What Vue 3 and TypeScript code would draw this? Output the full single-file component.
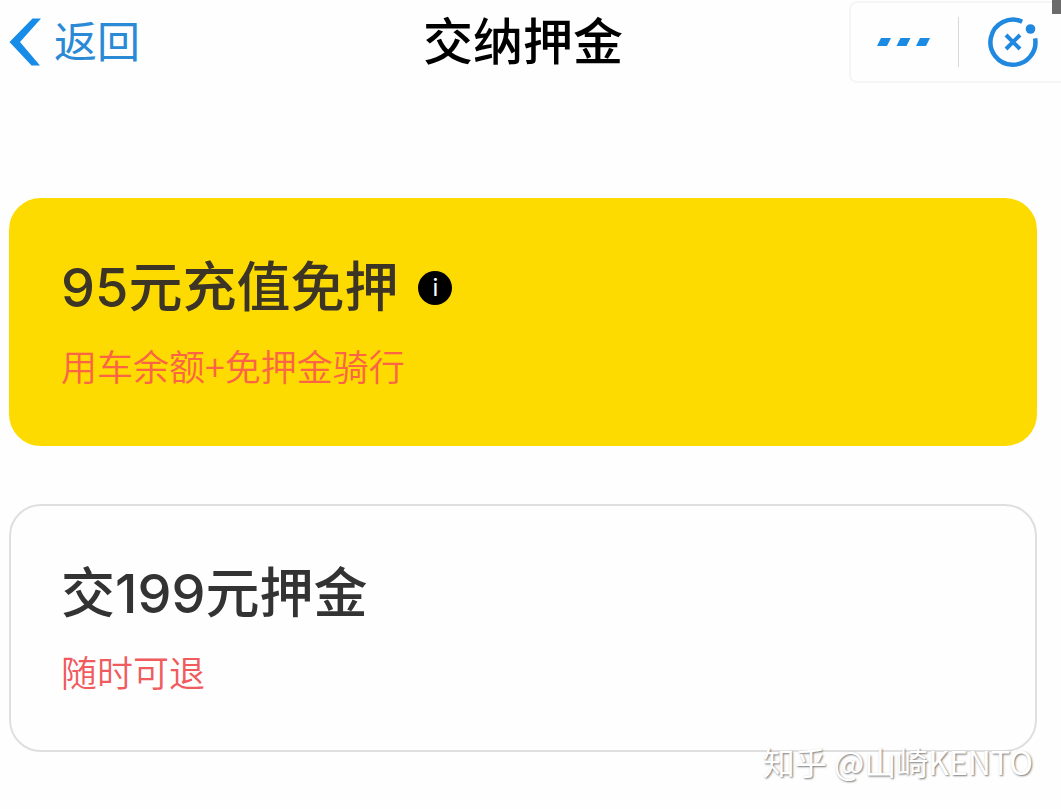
<script setup lang="ts">
import { ref } from 'vue'

interface Plan {
  id: string
  title: string
  note: string
  hasInfo: boolean
}

const plans: Plan[] = [
  { id: 'recharge', title: '95元充值免押', note: '用车余额+免押金骑行', hasInfo: true },
  { id: 'deposit', title: '交199元押金', note: '随时可退', hasInfo: false },
]

const selected = ref<string>('recharge')
</script>

<template>
  <div class="page">
    <header class="bar">
      <a class="back" href="#">
        <svg class="chevron" viewBox="0 0 32 48" aria-hidden="true">
          <path d="M23.500 0.500H32L11 24L31 47.500H22.500L0.500 24Z" fill="#178be8" />
        </svg>
        <span>返回</span>
      </a>
      <h1 class="title">交纳押金</h1>
      <div class="capsule">
        <button class="tool more" type="button" aria-label="更多">
          <svg width="54" height="10" viewBox="0 0 54 10" aria-hidden="true">
            <path d="M4 1H14L10 9H0ZM23.500 1H33.500L29.500 9H19.500ZM43 1H53L49 9H39Z" fill="#1b8ae2" />
          </svg>
        </button>
        <button class="tool close" type="button" aria-label="关闭">
          <svg width="52" height="52" viewBox="0 0 52 52" fill="none" stroke="#2089df" aria-hidden="true">
            <path d="M35.200 5.700A22.500 22.500 0 1 0 48.100 22.300" stroke-width="4.500" />
            <path d="M19 19L33 33M33 19L19 33" stroke-width="4" />
            <circle cx="43.500" cy="13" r="4.800" fill="#2089df" stroke="none" />
          </svg>
        </button>
      </div>
    </header>

    <main class="plans">
      <section
        v-for="plan in plans"
        :key="plan.id"
        class="card"
        :class="{ active: plan.id === selected }"
        @click="selected = plan.id"
      >
        <div class="heading">
          <h2>{{ plan.title }}</h2>
          <button v-if="plan.hasInfo" class="info" type="button" aria-label="说明">i</button>
        </div>
        <p>{{ plan.note }}</p>
      </section>
    </main>

    <div class="corner"></div>
    <div class="watermark">知乎 @山崎KENTO</div>
  </div>
</template>

<style>
body {
  margin: 0;
  background: #fefefe;
}
</style>

<style scoped>
.page {
  position: relative;
  overflow: hidden;
  padding-bottom: 56px;
  font-family: Inter, "Noto Sans CJK SC", sans-serif;
}

.bar {
  display: grid;
  grid-template-columns: 1fr auto 1fr;
  align-items: center;
  height: 84px;
  padding: 0 24px 0 9px;
}

.back {
  display: flex;
  align-items: center;
  gap: 13px;
  color: #2a8ad6;
  font-size: 43px;
  line-height: 60px;
  text-decoration: none;
}

.chevron {
  width: 32px;
  height: 48px;
}

.title {
  margin: 0;
  color: #000;
  font-size: 50px;
  font-weight: 500;
  line-height: 72px;
}

.capsule {
  justify-self: end;
  display: flex;
  align-items: center;
  box-sizing: border-box;
  height: 82px;
  margin-right: -24px;
  border: 2px solid #f5f5f5;
  border-right: 0;
  border-radius: 8px 0 0 8px;
}

.tool {
  display: flex;
  align-items: center;
  box-sizing: border-box;
  height: 50px;
  margin: 0;
  padding: 0;
  border: 0;
  background: none;
}

.more {
  padding: 0 27px 0 26px;
  border-right: 1px solid #d8d8d8;
}

.close {
  padding: 0 22px 0 28px;
}

.plans {
  display: grid;
  gap: 58px;
  padding: 114px 24px 0 9px;
}

.card {
  box-sizing: border-box;
  padding: 48px 50px 52px;
  border: 2px solid #dfdfdf;
  border-radius: 32px;
  color: #333;
}

.active {
  border-color: #fddb00;
  background: #fddb00;
}

.heading {
  display: flex;
  align-items: center;
  gap: 20px;
}

h2 {
  margin: 0;
  font-size: 54px;
  font-weight: 500;
  line-height: 80px;
}

.active h2 {
  color: #3c3526;
}

.info {
  width: 34px;
  height: 34px;
  padding: 0;
  border: 0;
  border-radius: 50%;
  background: #000;
  color: #fff;
  font-family: Inter, sans-serif;
  font-size: 24px;
  line-height: 34px;
  text-align: center;
}

.card p {
  margin: 10px 0 0;
  color: #f05b5e;
  font-family: "Noto Sans CJK SC", sans-serif;
  font-size: 36px;
  font-weight: 350;
  line-height: 54px;
}

.active p {
  color: #fb6546;
}

.corner {
  position: absolute;
  top: 0;
  right: 0;
  width: 9px;
  height: 14px;
  background: #6b6b6b;
}

.watermark {
  position: absolute;
  right: 28px;
  bottom: 23px;
  color: #fff;
  font-family: "Noto Sans CJK SC", sans-serif;
  font-size: 32px;
  line-height: 48px;
  text-shadow: 1px 1px 2px #777;
  white-space: nowrap;
}
</style>
